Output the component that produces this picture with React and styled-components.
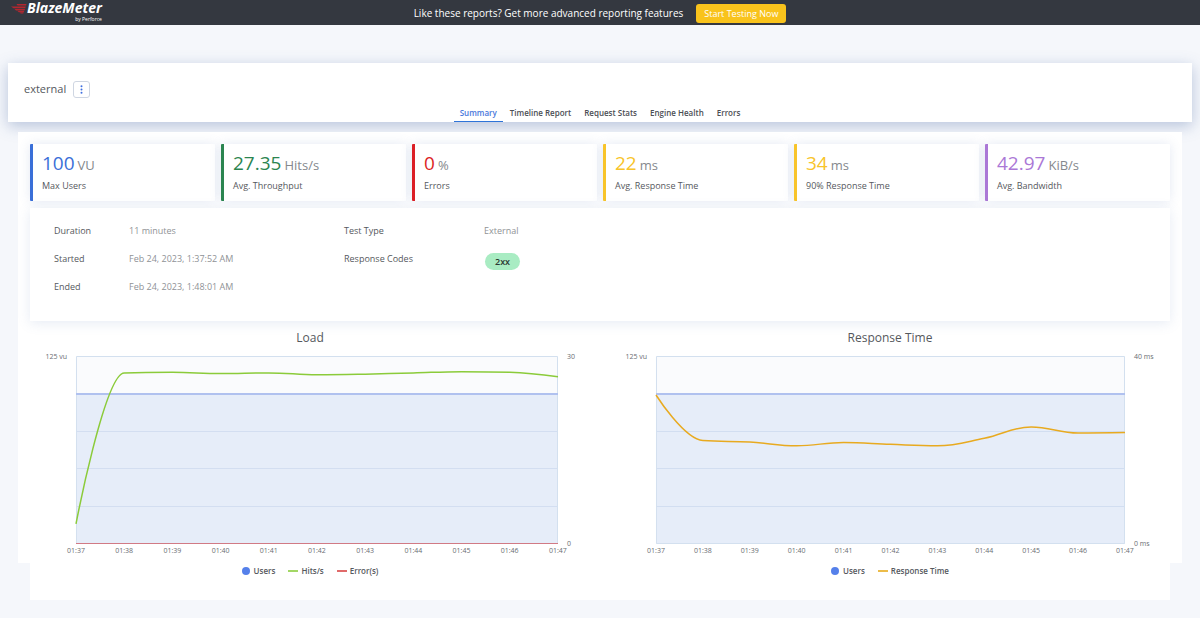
import React from 'react';
import styled, { createGlobalStyle } from 'styled-components';

const GlobalStyle = createGlobalStyle`
  * {
    box-sizing: border-box;
  }
  body {
    margin: 0;
    background: #f5f7fb;
    color: #55585d;
    font-family: "Open Sans", "Noto Sans", sans-serif;
    font-size: 9px;
    line-height: 12px;
  }
  button {
    font-family: inherit;
    cursor: pointer;
  }
`;

const TopBar = styled.header`
  display: grid;
  grid-template-columns: 1fr auto 1fr;
  align-items: center;
  height: 25px;
  background: #343840;
  color: #fff;
`;
const Logo = styled.a`
  display: flex;
  align-items: flex-start;
  justify-self: start;
  height: 25px;
  padding: 1px 0 0 11px;
  color: #fff;
  text-decoration: none;
`;
const LogoWing = styled.svg`
  width: 16px;
  height: 13px;
`;
const LogoText = styled.span`
  display: flex;
  flex-direction: column;
  align-items: flex-end;
`;
const LogoName = styled.span`
  font-size: 14px;
  font-style: italic;
  font-weight: 700;
  line-height: 14px;
`;
const LogoBy = styled.span`
  font-size: 5px;
  line-height: 8px;
`;
const Promo = styled.div`
  display: flex;
  align-items: center;
  gap: 13px;
  font-size: 10px;
`;
const PromoButton = styled.button`
  height: 19px;
  margin-top: 2px;
  padding: 0 8px;
  border: 0;
  border-radius: 3px;
  background: #f9c31c;
  color: #fff;
  font-size: 9px;
  line-height: 19px;
`;

const ReportHeader = styled.section`
  display: flex;
  flex-direction: column;
  justify-content: space-between;
  height: 59px;
  margin: 38px 8px 10px;
  padding-top: 17px;
  background: #fff;
  box-shadow: 0 4px 14px rgba(70, 100, 160, 0.35);
`;
const TitleRow = styled.div`
  display: flex;
  align-items: center;
  gap: 7px;
  padding-left: 16px;
`;
const Title = styled.h1`
  margin: 0;
  font-size: 11px;
  font-weight: 400;
  line-height: 18px;
`;
const MenuButton = styled.button`
  display: flex;
  align-items: center;
  justify-content: center;
  width: 17px;
  height: 17px;
  padding: 0;
  border: 1px solid #cfd6e2;
  border-radius: 3px;
  background: #fff;
`;
const Tabs = styled.nav`
  display: flex;
  justify-content: center;
  gap: 1px;
`;
const Tab = styled.a`
  padding: 0 6px 2px;
  border-bottom: 1px solid ${props => (props.$active ? '#2f74d8' : 'transparent')};
  color: ${props => (props.$active ? '#4a78dc' : '#4b4e54')};
  font-size: 8px;
  font-weight: 600;
  line-height: 13px;
  text-decoration: none;
`;

/* the white sheet stops short of the charts, which hang below it */
const Report = styled.main`
  margin: 0 18px;
  padding: 12px 12px 0;
  background: linear-gradient(#fff, #fff) no-repeat;
  background-size: 100% calc(100% - 37px);
`;
const Stats = styled.section`
  display: grid;
  grid-template-columns: repeat(6, 1fr);
  gap: 6px;
  margin-bottom: 7px;
`;
const StatCard = styled.div`
  padding: 7px 0 9px 9px;
  border-left: 3px solid ${props => props.$color};
  border-radius: 1px;
  background: #fff;
  box-shadow: 0 0 12px rgba(90, 120, 180, 0.16);
`;
const StatValue = styled.div`
  display: flex;
  align-items: baseline;
  gap: 3px;
  height: 24px;
  color: #85888d;
  font-size: 13px;
  line-height: 24px;
  white-space: nowrap;
`;
const StatNumber = styled.span`
  color: ${props => props.$color};
  font-size: 19px;
`;
const StatLabel = styled.div`
  margin-top: 4px;
  line-height: 13px;
`;

const Details = styled.section`
  position: relative;
  display: grid;
  grid-template-columns: 290px 1fr;
  height: 113px;
  padding: 16px 24px;
  background: #fff;
  box-shadow: 0 2px 12px rgba(90, 120, 180, 0.15);
`;
const DetailList = styled.dl`
  display: grid;
  grid-template-columns: ${props => props.$labelWidth} 1fr;
  grid-auto-rows: 14px;
  row-gap: 14px;
  align-content: start;
  margin: 0;
  line-height: 14px;
`;
const DetailName = styled.dt`
  margin: 0;
`;
const DetailValue = styled.dd`
  margin: 0;
  color: #8f9296;
`;
const CodeBadge = styled.span`
  display: inline-block;
  margin: 1px 0 0 1px;
  padding: 0 10px;
  border-radius: 9px;
  background: #a9ecc3;
  color: #2b3a33;
  font-weight: 600;
  line-height: 17px;
`;

const Charts = styled.section`
  display: grid;
  grid-template-columns: 1fr 1fr;
  gap: 20px;
  margin-bottom: 17px;
  padding: 8px 0 23px;
  background: #fff;
`;
const ChartBox = styled.figure`
  margin: 0;
`;
const ChartTitle = styled.figcaption`
  font-size: 12px;
  line-height: 18px;
  text-align: center;
`;
const ChartGrid = styled.div`
  display: grid;
  grid-template-columns: 46px 1fr ${props => props.$right};
  margin-top: 9px;
  color: #6a6d72;
  font-size: 7px;
  line-height: 10px;
`;
const Axis = styled.div`
  display: flex;
  flex-direction: column;
  justify-content: space-between;
  margin: -4px 0 -5px;
  padding: 0 9px;
  text-align: ${props => props.$align};
  white-space: nowrap;
`;
const Plot = styled.svg`
  display: block;
  width: 100%;
  height: 188px;
`;
const TimeAxis = styled.div`
  display: flex;
  grid-column: 2;
  justify-content: space-between;
  padding-top: 2px;
`;
const TimeLabel = styled.span`
  display: flex;
  justify-content: center;
  width: 0;
`;
const Legend = styled.div`
  display: flex;
  justify-content: center;
  gap: 13px;
  margin-top: 9px;
  color: #55585d;
  font-size: 8px;
  font-weight: 600;
`;
const LegendItem = styled.span`
  display: flex;
  align-items: center;
  gap: 3px;
`;
const Dot = styled.i`
  width: 8px;
  height: 8px;
  margin-right: 1px;
  border-radius: 50%;
  background: ${props => props.$color};
`;
const Dash = styled.i`
  width: 10px;
  height: 2px;
  background: ${props => props.$color};
`;

const stats = [
  { value: '100', unit: 'VU', label: 'Max Users', color: '#3a6fd8' },
  { value: '27.35', unit: 'Hits/s', label: 'Avg. Throughput', color: '#2b8550' },
  { value: '0', unit: '%', label: 'Errors', color: '#dc1f26' },
  { value: '22', unit: 'ms', label: 'Avg. Response Time', color: '#f8c42a' },
  { value: '34', unit: 'ms', label: '90% Response Time', color: '#f8c42a' },
  { value: '42.97', unit: 'KiB/s', label: 'Avg. Bandwidth', color: '#ab78d6' },
];

const tabs = ['Summary', 'Timeline Report', 'Request Stats', 'Engine Health', 'Errors'];

const times = ['01:37', '01:38', '01:39', '01:40', '01:41', '01:42', '01:43', '01:44', '01:45', '01:46', '01:47'];

const hits = [3.2, 27.3, 27.4, 27.2, 27.3, 27, 27.1, 27.3, 27.5, 27.4, 26.7];
const responseTimes = [31.7, 22, 21.7, 20.9, 21.6, 21.2, 20.9, 22.5, 24.9, 23.6, 23.7];

const PLOT_W = 1000;
const PLOT_H = 188;

// bezier spline that never overshoots its neighbouring points
const splinePath = (values, max) => {
  const pts = values.map((v, i) => ({
    x: (i * PLOT_W) / (values.length - 1),
    y: PLOT_H - (v / max) * PLOT_H,
  }));
  let d = `M${pts[0].x} ${pts[0].y}`;
  let prevControl = pts[0];

  for (let i = 1; i < pts.length; i++) {
    const last = pts[i - 1];
    const p = pts[i];
    const next = pts[i + 1];
    let left = { ...p };
    let right = { ...p };
    if (next) {
      left = { x: (1.5 * p.x + last.x) / 2.5, y: (1.5 * p.y + last.y) / 2.5 };
      right = { x: (1.5 * p.x + next.x) / 2.5, y: (1.5 * p.y + next.y) / 2.5 };
      const shift = ((right.y - left.y) * (right.x - p.x)) / (right.x - left.x) + p.y - right.y;
      left.y += shift;
      right.y += shift;
      if (left.y > Math.max(last.y, p.y) || left.y < Math.min(last.y, p.y)) {
        left.y = left.y > p.y ? Math.max(last.y, p.y) : Math.min(last.y, p.y);
        right.y = 2 * p.y - left.y;
      }
      if (right.y > Math.max(next.y, p.y) || right.y < Math.min(next.y, p.y)) {
        right.y = right.y > p.y ? Math.max(next.y, p.y) : Math.min(next.y, p.y);
        left.y = 2 * p.y - right.y;
      }
    }
    d += ` C${prevControl.x} ${prevControl.y} ${left.x} ${left.y} ${p.x} ${p.y}`;
    prevControl = right;
  }
  return d;
};

const Chart = ({ title, maxLabel, minLabel, right, values, max, color, children }) => (
  <ChartBox>
    <ChartTitle>{title}</ChartTitle>
    <ChartGrid $right={right}>
      <Axis $align="right">
        <span>125 vu</span>
      </Axis>
      <Plot viewBox={`0 0 ${PLOT_W} ${PLOT_H}`} preserveAspectRatio="none" overflow="visible">
        <rect width={PLOT_W} height={PLOT_H} fill="#fafbfd" />
        <rect y="38" width={PLOT_W} height="150" fill="#e6edf9" />
        <g stroke="#cbd9ed">
          {[75.5, 112.5, 150.5].map(y => (
            <line key={y} x2={PLOT_W} y1={y} y2={y} />
          ))}
        </g>
        <rect x="1" y="0.5" width={PLOT_W - 2} height="187" fill="none" stroke="#d3e0ef" vectorEffect="non-scaling-stroke" />
        <line x2={PLOT_W} y1="38" y2="38" stroke="#b0c1ef" strokeWidth="2" />
        {children}
        <path d={splinePath(values, max)} fill="none" stroke={color} strokeWidth="1.5" vectorEffect="non-scaling-stroke" />
      </Plot>
      <Axis $align="left">
        <span>{maxLabel}</span>
        <span>{minLabel}</span>
      </Axis>
      <TimeAxis>
        {times.map(time => (
          <TimeLabel key={time}>{time}</TimeLabel>
        ))}
      </TimeAxis>
    </ChartGrid>
    <Legend>
      <LegendItem>
        <Dot $color="#5580ea" />
        Users
      </LegendItem>
      {title === 'Load' ? (
        <>
          <LegendItem>
            <Dash $color="#a3d765" />
            Hits/s
          </LegendItem>
          <LegendItem>
            <Dash $color="#e06a6a" />
            Error(s)
          </LegendItem>
        </>
      ) : (
        <LegendItem>
          <Dash $color="#ecbc4a" />
          Response Time
        </LegendItem>
      )}
    </Legend>
  </ChartBox>
);

class App extends React.Component {
  constructor(props) {
    super(props);
    this.state = { tab: 'Summary' };
  }

  selectTab(event, tab) {
    event.preventDefault();
    this.setState({ tab });
  }

  renderTopBar() {
    return (
      <TopBar>
        <Logo href="#">
          <LogoWing viewBox="0 0 16 13" fill="#b3262f">
            <path d="M5.5 3H15.5L15 4.6H6.5ZM0 5.6H14.8L14.2 7.2H2.5ZM3.5 8H14L13.6 9.4H5ZM6.5 10H13.2L12.8 11.2H7.8ZM9 11.6H12.6L12.2 12.6H9.6Z" />
          </LogoWing>
          <LogoText>
            <LogoName>BlazeMeter</LogoName>
            <LogoBy>by Perforce</LogoBy>
          </LogoText>
        </Logo>
        <Promo>
          Like these reports? Get more advanced reporting features
          <PromoButton type="button">Start Testing Now</PromoButton>
        </Promo>
      </TopBar>
    );
  }

  renderHeader() {
    return (
      <ReportHeader>
        <TitleRow>
          <Title>external</Title>
          <MenuButton type="button" aria-label="Report menu">
            <svg width="3" height="9" viewBox="0 0 3 9" fill="#3f6fe0">
              <circle cx="1.5" cy="1.2" r="1" />
              <circle cx="1.5" cy="4.5" r="1" />
              <circle cx="1.5" cy="7.8" r="1" />
            </svg>
          </MenuButton>
        </TitleRow>
        <Tabs>
          {tabs.map(tab => (
            <Tab
              key={tab}
              href="#"
              $active={tab === this.state.tab}
              onClick={event => this.selectTab(event, tab)}
            >
              {tab}
            </Tab>
          ))}
        </Tabs>
      </ReportHeader>
    );
  }

  render() {
    return (
      <>
        <GlobalStyle />
        {this.renderTopBar()}
        {this.renderHeader()}
        <Report>
          <Stats>
            {stats.map(stat => (
              <StatCard key={stat.label} $color={stat.color}>
                <StatValue>
                  <StatNumber $color={stat.color}>{stat.value}</StatNumber>
                  <span>{stat.unit}</span>
                </StatValue>
                <StatLabel>{stat.label}</StatLabel>
              </StatCard>
            ))}
          </Stats>
          <Details>
            <DetailList $labelWidth="75px">
              <DetailName>Duration</DetailName>
              <DetailValue>11 minutes</DetailValue>
              <DetailName>Started</DetailName>
              <DetailValue>Feb 24, 2023, 1:37:52 AM</DetailValue>
              <DetailName>Ended</DetailName>
              <DetailValue>Feb 24, 2023, 1:48:01 AM</DetailValue>
            </DetailList>
            <DetailList $labelWidth="140px">
              <DetailName>Test Type</DetailName>
              <DetailValue>External</DetailValue>
              <DetailName>Response Codes</DetailName>
              <DetailValue>
                <CodeBadge>2xx</CodeBadge>
              </DetailValue>
            </DetailList>
          </Details>
          <Charts>
            <Chart title="Load" maxLabel="30" minLabel="0" right="32px" values={hits} max={30} color="#8bcb3a">
              <line x2={PLOT_W} y1="187.5" y2="187.5" stroke="#d0565f" />
            </Chart>
            <Chart
              title="Response Time"
              maxLabel="40 ms"
              minLabel="0 ms"
              right="45px"
              values={responseTimes}
              max={40}
              color="#e8aa20"
            />
          </Charts>
        </Report>
      </>
    );
  }
}

export default App;
